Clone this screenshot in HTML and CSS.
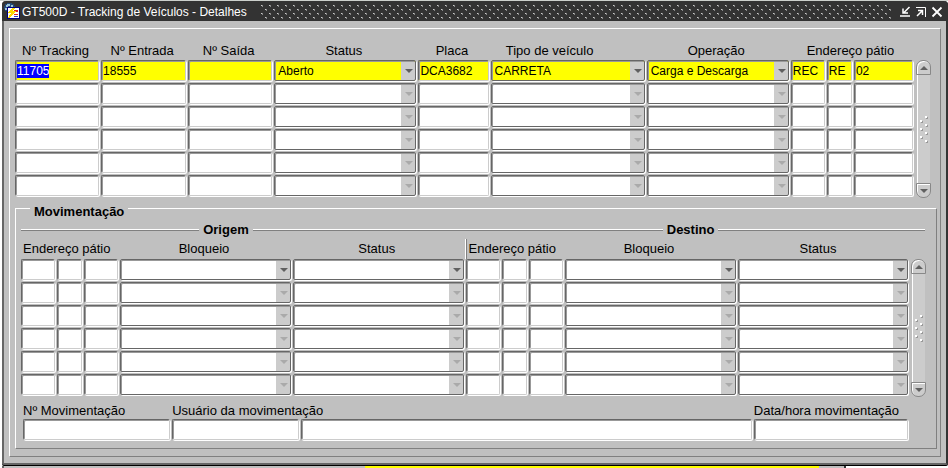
FILE: index.html
```
<!DOCTYPE html>
<html lang="pt-BR">

<head>
    <meta charset="UTF-8">
    <meta name="viewport" content="width=device-width, initial-scale=1.0">
    <title>GT500D - Tracking de Veículos - Detalhes</title>
    <link rel="stylesheet" href="styles.css">
</head>

<body>
    <main class="window">
        <header class="titlebar">
            <svg class="app-icon" width="17" height="17" viewBox="0 0 17 17" shape-rendering="crispEdges" aria-hidden="true">
                <path d="M3 0h5v1h2v2h1v6H3V8H1V6H0V3h1V1h2z" fill="#234a78" />
                <path d="M3 1h3v2H4v1H2V2h1zM7 2h2v2H7zM1 5h2v2H1z" fill="#9cc4d8" />
                <path d="M3 4h13v12H3z" fill="#000080" />
                <path d="M4 5h11v10H4z" fill="#fff" />
                <path d="M10 7h4v2h-4zM10 11h4v1h-4z" fill="#e02020" />
                <path d="M10 13h4v1h-4z" fill="#3040c0" />
                <path d="M8 5h3l-2 3h3l-7 7H4l3-5H4z" fill="#ffd800" />
            </svg>
            <h1>GT500D - Tracking de Veículos - Detalhes</h1>
            <span class="grip"></span>
            <button class="win-btn" aria-label="Minimizar">
                <svg width="12" height="12" viewBox="0 0 12 12"><path d="M10.500 1L5 6.500M4 2.500V7h5M1 10h10" fill="none" stroke="#fff" stroke-width="1.500" /></svg>
            </button>
            <button class="win-btn" aria-label="Maximizar">
                <svg width="12" height="12" viewBox="0 0 12 12"><path d="M1 1.500h9.500V11" fill="none" stroke="#fff" /><path d="M2 10l5-5M3 4.500h4.500V9" fill="none" stroke="#fff" stroke-width="1.500" /></svg>
            </button>
            <button class="win-btn" aria-label="Fechar">
                <svg width="12" height="12" viewBox="0 0 12 12"><path d="M1.500 1.500l9 9M10.500 1.500l-9 9" fill="none" stroke="#fff" stroke-width="1.800" /></svg>
            </button>
        </header>

        <div class="panel">
            <div class="block tracking">
                <table class="records" id="tracking">
                    <colgroup>
                        <col class="c86"><col class="c87"><col class="c86"><col class="c144"><col class="c72">
                        <col class="c156"><col class="c144"><col class="c36"><col class="c27"><col class="c61">
                    </colgroup>
                    <thead>
                        <tr>
                            <th>Nº Tracking</th>
                            <th>Nº Entrada</th>
                            <th>Nº Saída</th>
                            <th>Status</th>
                            <th>Placa</th>
                            <th class="tipo">Tipo de veículo</th>
                            <th>Operação</th>
                            <th colspan="3">Endereço pátio</th>
                        </tr>
                    </thead>
                    <tbody></tbody>
                </table>
                <div class="scroll">
                    <button class="up" aria-label="Anterior"></button>
                    <span class="track"></span>
                    <button class="down" aria-label="Próximo"></button>
                </div>
            </div>

            <fieldset class="moves">
                <legend>Movimentação</legend>
                <div class="sides">
                    <h2 class="origin">Origem</h2>
                    <h2 class="target">Destino</h2>
                </div>
                <div class="block">
                    <table class="records" id="moves">
                        <colgroup>
                            <col class="c36"><col class="c27"><col class="c36"><col class="c173"><col class="c173">
                            <col class="c36"><col class="c27"><col class="c36"><col class="c173"><col class="c172">
                        </colgroup>
                        <thead>
                            <tr>
                                <th colspan="3" class="left">Endereço pátio</th>
                                <th>Bloqueio</th>
                                <th>Status</th>
                                <th colspan="3" class="left divider">Endereço pátio</th>
                                <th>Bloqueio</th>
                                <th class="last">Status</th>
                            </tr>
                        </thead>
                        <tbody></tbody>
                    </table>
                    <div class="scroll">
                        <button class="up" aria-label="Anterior"></button>
                        <span class="track"></span>
                        <button class="down" aria-label="Próximo"></button>
                    </div>
                </div>
                <div class="details">
                    <div class="item"><label for="nmov">Nº Movimentação</label><input type="text" id="nmov"></div>
                    <div class="item user"><label for="usuario">Usuário da movimentação</label><input type="text" id="usuario"></div>
                    <div class="item name"><input type="text" id="nome" aria-label="Nome do usuário"></div>
                    <div class="item date"><label for="datahora">Data/hora movimentação</label><input type="text" id="datahora"></div>
                </div>
            </fieldset>
        </div>
    </main>
    <div class="behind"><span class="behind-row"></span></div>

    <script src="script.js"></script>
</body>

</html>
```
FILE: styles.css
```
* {
    box-sizing: border-box;
    margin: 0;
    padding: 0;
}
body {
    background: #fff;
    border-top: 1px solid #ccd0cc;
    font-family: "Liberation Sans", Arial, sans-serif;
    font-size: 13px;
    color: #000;
    overflow: hidden;
}
.window {
    margin-left: 2px;
    background: #c0c0c0;
    border: 2px solid #666;
    border-top: 0;
    border-right-color: #333;
    border-radius: 4px 4px 2px 2px;
    box-shadow: 0 1px #000;
    padding-bottom: 6px;
}

/* title bar */
.titlebar {
    display: flex;
    align-items: center;
    height: 20px;
    margin: 0 -2px;
    padding: 1px 3px 0 2px;
    background: #333;
    color: #fff;
    border-radius: 4px 4px 0 0;
}
.titlebar h1 {
    font-size: 12px;
    font-weight: normal;
    margin: 0 14px 0 1px;
}
.grip {
    flex: 1;
    height: 14px;
    margin-right: 4px;
    background: url("data:image/svg+xml,%3Csvg xmlns='http://www.w3.org/2000/svg' width='8' height='8'%3E%3Cpath fill='%23ccc' d='M0 0h1v1H0zM4 4h1v1H4z'/%3E%3Cpath fill='%23888' d='M1 1h1v1H1zM5 5h1v1H5zM1 0h1v1H1zM5 4h1v1H5z'/%3E%3C/svg%3E");
}
.win-btn {
    width: 16px;
    height: 16px;
    border: 0;
    background: transparent;
    line-height: 0;
}

.panel {
    margin: 7px 5px 0 5px;
    padding: 0 5px 7px;
    border: 1px solid #808080;
    border-top-color: #fff;
    border-left-color: #fff;
}
.block {
    display: flex;
}
.tracking {
    padding: 13px 4px 0 0;
}

/* record grids */
.records {
    flex: 1;
    width: 100%;
    table-layout: fixed;
    border-collapse: collapse;
}
.c27 { width: 27px; }
.c36 { width: 36px; }
.c61 { width: 61px; }
.c72 { width: 72px; }
.c86 { width: 86px; }
.c87 { width: 87px; }
.c144 { width: 144px; }
.c156 { width: 156px; }
.c172 { width: 172px; }
.c173 { width: 173px; }
th {
    font-weight: normal;
    height: 18px;
    line-height: 18px;
    white-space: nowrap;
    padding-right: 5px;
}
th.left {
    text-align: left;
    padding: 0 0 0 2px;
}
th.tipo {
    padding-right: 38px;
}
th.last {
    padding-right: 12px;
}
th.divider {
    border-left: 1px solid #808080;
    box-shadow: -1px 0 #fff;
}
td {
    height: 23px;
    vertical-align: top;
    padding-right: 2px;
}
input,
select {
    display: block;
    width: 100%;
    height: 21px;
    background: #fff;
    border: 1px solid #666;
    border-radius: 2px;
    box-shadow: 1px 1px #fff, inset 1px 1px #999;
    font-family: inherit;
    font-size: 12px;
    color: #000;
    outline: none;
}
input {
    border-right-color: #ccc;
    border-bottom-color: #ccc;
    padding: 0 1px;
}
select {
    appearance: none;
    padding: 0 16px 0 3px;
    background: #fff url("data:image/svg+xml,%3Csvg xmlns='http://www.w3.org/2000/svg' width='14' height='19'%3E%3Cpath fill='%23ccc' d='M0 0h14v19H0z'/%3E%3Cpath fill='%23606060' d='M4 7h8L8 11z'/%3E%3C/svg%3E") no-repeat right 0 top 1px;
}
select:disabled {
    opacity: 1;
    background-image: url("data:image/svg+xml,%3Csvg xmlns='http://www.w3.org/2000/svg' width='14' height='19'%3E%3Cpath fill='%23ccc' d='M0 0h14v19H0z'/%3E%3Cpath fill='%23aaa' d='M4 7h8L8 11z'/%3E%3C/svg%3E");
}
.current input,
.current select {
    background-color: #ff0;
}
::selection {
    background: #00f;
    color: #fff;
}

/* scroll bars */
.scroll {
    display: flex;
    flex-direction: column;
    width: 15px;
    margin: 18px 0 0 1px;
}
.scroll button {
    height: 15px;
    border: 1px solid #888;
    box-shadow: inset 1px 1px #fff;
    background: #ccc url("data:image/svg+xml,%3Csvg xmlns='http://www.w3.org/2000/svg' width='8' height='4'%3E%3Cpath fill='%23606060' d='M0 4h8L4 0z'/%3E%3C/svg%3E") no-repeat center;
}
.scroll .up {
    border-radius: 7px 7px 0 0;
}
.scroll .down {
    border-radius: 0 0 7px 7px;
    background-image: url("data:image/svg+xml,%3Csvg xmlns='http://www.w3.org/2000/svg' width='8' height='4'%3E%3Cpath fill='%23606060' d='M0 0h8L4 4z'/%3E%3C/svg%3E");
}
.track {
    flex: 1;
    margin: 0 1px;
    border-left: 1px solid #fff;
    background: #ccc url("data:image/svg+xml,%3Csvg xmlns='http://www.w3.org/2000/svg' width='8' height='27'%3E%3Cg fill='%23999'%3E%3Cpath d='M6 1h2v2H6zM1 5h2v2H1zM6 9h2v2H6zM1 13h2v2H1zM6 17h2v2H6zM1 21h2v2H1zM6 25h2v2H6z'/%3E%3C/g%3E%3Cpath fill='%23fff' d='M5 0h2v2H5zM0 4h2v2H0zM5 8h2v2H5zM0 12h2v2H0zM5 16h2v2H5zM0 20h2v2H0zM5 24h2v2H5z'/%3E%3C/svg%3E") no-repeat center;
}

/* movements */
.moves {
    border: 1px solid #808080;
    border-top-color: #fff;
    border-left-color: #fff;
    margin: -2px 1px 0 0;
    padding: 1px 10px 8px 5px;
}
legend {
    font-weight: bold;
    line-height: 16px;
    margin-left: 9px;
    padding: 8px 4px 0;
}
.moves th {
    height: 20px;
    line-height: 20px;
}
.moves .scroll {
    margin-top: 20px;
}
.sides {
    display: grid;
    grid-template-columns: 445fr 458fr;
    padding-right: 1px;
}
.sides h2 {
    display: flex;
    align-items: center;
    gap: 4px;
    font-size: 13px;
    line-height: 18px;
}
.sides h2::before,
.sides h2::after {
    content: "";
    flex: 19;
    height: 2px;
    background: linear-gradient(#fff 50%, #808080 50%);
}
.sides .origin::before {
    flex: 15;
}
.sides .origin::after {
    flex: 18;
}
.sides .target::after {
    flex: 20;
}
.details {
    display: flex;
    align-items: flex-end;
    gap: 2px;
    padding: 5px 18px 0 2px;
}
.item {
    flex: 147 1 0;
    min-width: 0;
    white-space: nowrap;
}
.item.user {
    flex-grow: 127;
}
.item.name {
    flex-grow: 450;
}
.item.date {
    flex-grow: 154;
}
.details label {
    display: block;
    line-height: 17px;
}

/* window underneath */
.behind {
    width: 89%;
    height: 4px;
    margin: 1px 0 0 2px;
    background: #c0c0c0;
    border-left: 2px solid #666;
    border-right: 2px solid #333;
}
.behind-row {
    display: block;
    width: 54%;
    height: 2px;
    margin-left: 43%;
    background: #ff0;
}
```
FILE: script.js
```
const grids = {
    tracking: {
        labels: ["Nº Tracking", "Nº Entrada", "Nº Saída", "Status", "Placa", "Tipo de veículo", "Operação", "Pátio", "Quadra", "Vaga"],
        lists: [3, 5, 6],
        first: ["11705", "18555", "", "Aberto", "DCA3682", "CARRETA", "Carga e Descarga", "REC", "RE", "02"]
    },
    moves: {
        labels: ["Pátio origem", "Quadra origem", "Vaga origem", "Bloqueio origem", "Status origem", "Pátio destino", "Quadra destino", "Vaga destino", "Bloqueio destino", "Status destino"],
        lists: [3, 4, 8, 9],
        first: ["", "", "", "", "", "", "", "", "", ""]
    }
};

function fill(id) {
    const grid = grids[id];
    const body = document.querySelector("#" + id + " tbody");
    for (let r = 0; r < 6; r++) {
        const row = body.insertRow();
        if (r === 0 && id === "tracking") {
            row.className = "current";
        }
        grid.labels.forEach((label, c) => {
            const value = r === 0 ? grid.first[c] : "";
            const isList = grid.lists.includes(c);
            const field = document.createElement(isList ? "select" : "input");
            if (isList) {
                field.add(new Option(value));
                field.disabled = r > 0;
            } else {
                field.type = "text";
                field.value = value;
            }
            field.setAttribute("aria-label", label + " " + (r + 1));
            row.insertCell().appendChild(field);
        });
    }
}

fill("tracking");
fill("moves");
document.querySelector("#tracking input").select();
```
